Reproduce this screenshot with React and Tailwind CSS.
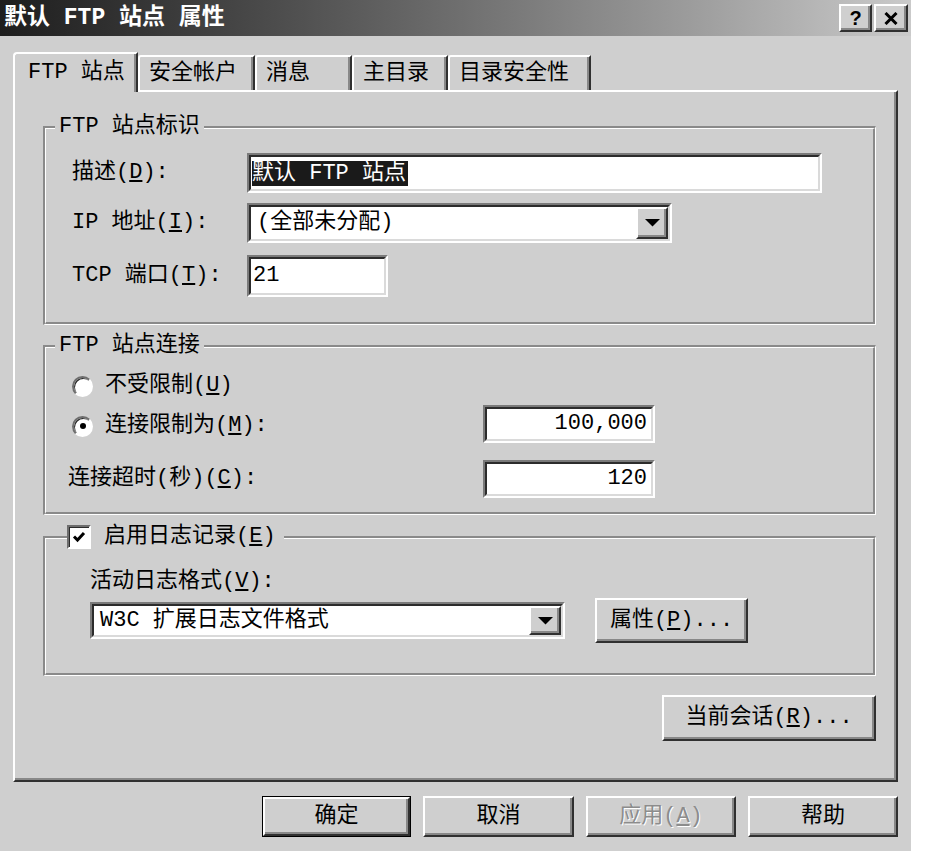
import React from 'react';

const TABS = [
  { label: 'FTP 站点', w: 'w-[125px]', active: true },
  { label: '安全帐户', w: 'w-[117px]' },
  { label: '消息', w: 'w-[97px]' },
  { label: '主目录', w: 'w-[96px]' },
  { label: '目录安全性', w: 'w-[143px]' },
];

function Raised({ className = '', children }) {
  return (
    <div
      className={`flex items-center justify-center border-2 border-t-white border-l-white border-r-[#303030] border-b-[#303030] bg-[#cfcfcf] shadow-[inset_-2px_-2px_0_#888888] ${className}`}
    >
      {children}
    </div>
  );
}

function Sunken({ className = '', inner = '', children }) {
  return (
    <div className={`border-2 border-t-[#7a7a7a] border-l-[#7a7a7a] border-r-white border-b-white ${className}`}>
      <div
        className={`flex h-full w-full items-center border-2 border-t-[#2c2c2c] border-l-[#2c2c2c] border-r-[#dadada] border-b-[#dadada] bg-white ${inner}`}
      >
        {children}
      </div>
    </div>
  );
}

function DownArrow() {
  return (
    <svg width="15" height="8" viewBox="0 0 15 8">
      <path d="M0 0 H15 L7.5 7.5 Z" fill="#000" />
    </svg>
  );
}

function Combo({ className = '', children }) {
  return (
    <Sunken className={className}>
      <span className="flex-1 whitespace-nowrap pl-[6px] leading-[28px]">{children}</span>
      <Raised className="h-full w-[32px]">
        <DownArrow />
      </Raised>
    </Sunken>
  );
}

function Radio({ checked }) {
  return (
    <div className="flex h-[21px] w-[21px] items-center justify-center rounded-full border-2 border-t-[#6e6e6e] border-l-[#6e6e6e] border-r-white border-b-white bg-white shadow-[inset_1px_1px_0_#2c2c2c]">
      {checked && <div className="h-[6px] w-[6px] rounded-full bg-black" />}
    </div>
  );
}

function GroupBox({ label, className = '', children }) {
  return (
    <div
      className={`relative border-t-2 border-l-2 border-r border-b border-t-[#8a8a8a] border-l-[#8a8a8a] border-r-white border-b-white ${className}`}
    >
      <div className="h-full w-full border-t border-l border-r-2 border-b-2 border-t-white border-l-white border-r-[#8a8a8a] border-b-[#8a8a8a]">
        {children}
      </div>
      {label}
    </div>
  );
}

function Tab({ tab }) {
  if (tab.active) {
    return (
      <div
        className={`relative z-10 -mb-[2px] flex h-[40px] items-center rounded-tl-[4px] border-t-2 border-l-2 border-r-2 border-t-white border-l-white border-r-[#303030] bg-[#cfcfcf] pl-[13px] shadow-[inset_-2px_0_0_#888888] ${tab.w}`}
      >
        {tab.label}
      </div>
    );
  }
  return (
    <div
      className={`flex h-[35px] items-center rounded-tl-[3px] border-t-2 border-l-2 border-r-2 border-t-white border-l-white border-r-[#303030] pl-[9px] shadow-[inset_-2px_0_0_#888888] ${tab.w}`}
    >
      {tab.label}
    </div>
  );
}

export default function App() {
  return (
    <div className="h-[867px] w-[936px] bg-white font-['Liberation_Mono','Noto_Sans_CJK_SC',monospace] text-[22px] leading-none text-black">
      <div className="flex h-[851px] w-[911px] flex-col bg-[#cfcfcf]">
        {/* title bar */}
        <div className="flex h-[36px] items-center justify-between bg-linear-to-r from-[#1e1e1e] via-[#6e6e6e] to-[#cacaca] pl-[4px] pr-[3px]">
          <span className="text-[23px] font-bold leading-[30px] text-white">默认 FTP 站点 属性</span>
          <div className="flex gap-[2px]">
            <Raised className="h-[28px] w-[33px]">
              <span className="font-['Liberation_Sans',sans-serif] text-[20px] font-bold">?</span>
            </Raised>
            <Raised className="h-[28px] w-[34px]">
              <svg width="14" height="13" viewBox="0 0 14 13">
                <path d="M1.5 1 L12.5 12 M12.5 1 L1.5 12" stroke="#000" strokeWidth="3" />
              </svg>
            </Raised>
          </div>
        </div>

        <div className="flex flex-col px-[13px] pt-[16px]">
          {/* tabs */}
          <div className="flex h-[38px] items-end">
            {TABS.map((tab) => (
              <Tab key={tab.label} tab={tab} />
            ))}
          </div>

          {/* tab page */}
          <div className="flex h-[692px] w-[885px] flex-col border-2 border-t-white border-l-white border-r-[#303030] border-b-[#303030] pt-[34px] pl-[28px] pr-[20px] shadow-[inset_-2px_-2px_0_#888888]">
            <GroupBox
              className="h-[199px]"
              label={
                <span className="absolute -top-[15px] left-[10px] bg-[#cfcfcf] px-[4px] leading-[28px]">FTP 站点标识</span>
              }
            >
              <div className="flex flex-col pl-[26px] pt-[24px]">
                <div className="flex h-[40px] items-center">
                  <span className="w-[175px]">
                    描述(<u>D</u>):
                  </span>
                  <Sunken className="h-[40px] w-[575px]">
                    <span className="ml-[1px] inline-block h-[25px] bg-[#1a1a1a] pr-[2px] leading-[25px] text-white">
                      默认 FTP 站点
                    </span>
                  </Sunken>
                </div>
                <div className="mt-[10px] flex h-[40px] items-center">
                  <span className="w-[175px]">
                    IP 地址(<u>I</u>):
                  </span>
                  <Combo className="h-[40px] w-[425px]">(全部未分配)</Combo>
                </div>
                <div className="mt-[12px] flex h-[42px] items-center">
                  <span className="w-[175px]">
                    TCP 端口(<u>T</u>):
                  </span>
                  <Sunken className="h-[42px] w-[141px]" inner="pl-[2px]">
                    21
                  </Sunken>
                </div>
              </div>
            </GroupBox>

            <GroupBox
              className="mt-[20px] h-[170px]"
              label={
                <span className="absolute -top-[15px] left-[10px] bg-[#cfcfcf] px-[4px] leading-[28px]">FTP 站点连接</span>
              }
            >
              <div className="flex flex-col pl-[26px] pt-[23px]">
                <div className="flex h-[30px] items-center gap-[12px]">
                  <Radio />
                  <span>
                    不受限制(<u>U</u>)
                  </span>
                </div>
                <div className="mt-[4px] flex h-[38px] items-center">
                  <div className="flex w-[411px] items-center gap-[12px] pt-[4px]">
                    <Radio checked />
                    <span>
                      连接限制为(<u>M</u>):
                    </span>
                  </div>
                  <Sunken className="h-[38px] w-[172px]" inner="justify-end pr-[4px]">
                    100,000
                  </Sunken>
                </div>
                <div className="-ml-[4px] mt-[17px] flex h-[38px] items-center">
                  <span className="w-[415px]">
                    连接超时(秒)(<u>C</u>):
                  </span>
                  <Sunken className="h-[38px] w-[172px]" inner="justify-end pr-[4px]">
                    120
                  </Sunken>
                </div>
              </div>
            </GroupBox>

            <GroupBox
              className="mt-[21px] h-[140px]"
              label={
                <div className="absolute -top-[15px] left-[22px] flex h-[28px] items-center gap-[13px] bg-[#cfcfcf] pr-[8px]">
                  <div className="flex h-[24px] w-[24px] items-center justify-center border-2 border-t-[#6e6e6e] border-l-[#6e6e6e] border-r-white border-b-white bg-white shadow-[inset_1px_1px_0_#2c2c2c]">
                    <svg width="14" height="12" viewBox="0 0 14 12">
                      <path d="M2 5.5 L5.5 9 L12 2" stroke="#000" strokeWidth="3" fill="none" />
                    </svg>
                  </div>
                  <span>
                    启用日志记录(<u>E</u>)
                  </span>
                </div>
              }
            >
              <div className="flex flex-col pl-[44px] pt-[28px]">
                <div className="flex h-[30px] items-center">
                  活动日志格式(<u>V</u>):
                </div>
                <div className="mt-[1px] flex h-[45px] items-center gap-[30px]">
                  <Combo className="h-[37px] w-[475px]">W3C 扩展日志文件格式</Combo>
                  <Raised className="h-[45px] w-[153px]">
                    <span>
                      属性(<u>P</u>)...
                    </span>
                  </Raised>
                </div>
              </div>
            </GroupBox>

            <Raised className="mt-[19px] h-[46px] w-[214px] self-end">
              <span>
                当前会话(<u>R</u>)...
              </span>
            </Raised>
          </div>

          {/* dialog buttons */}
          <div className="flex justify-end gap-[12px] pt-[14px]">
            <div className="h-[41px] w-[149px] border border-black">
              <Raised className="h-full w-full">确定</Raised>
            </div>
            <Raised className="h-[41px] w-[151px]">取消</Raised>
            <Raised className="h-[41px] w-[150px]">
              <span className="text-[#8c8c8c] [text-shadow:1px_1px_0_#ffffff]">
                应用(<u>A</u>)
              </span>
            </Raised>
            <Raised className="h-[41px] w-[150px]">帮助</Raised>
          </div>
        </div>
      </div>
    </div>
  );
}
